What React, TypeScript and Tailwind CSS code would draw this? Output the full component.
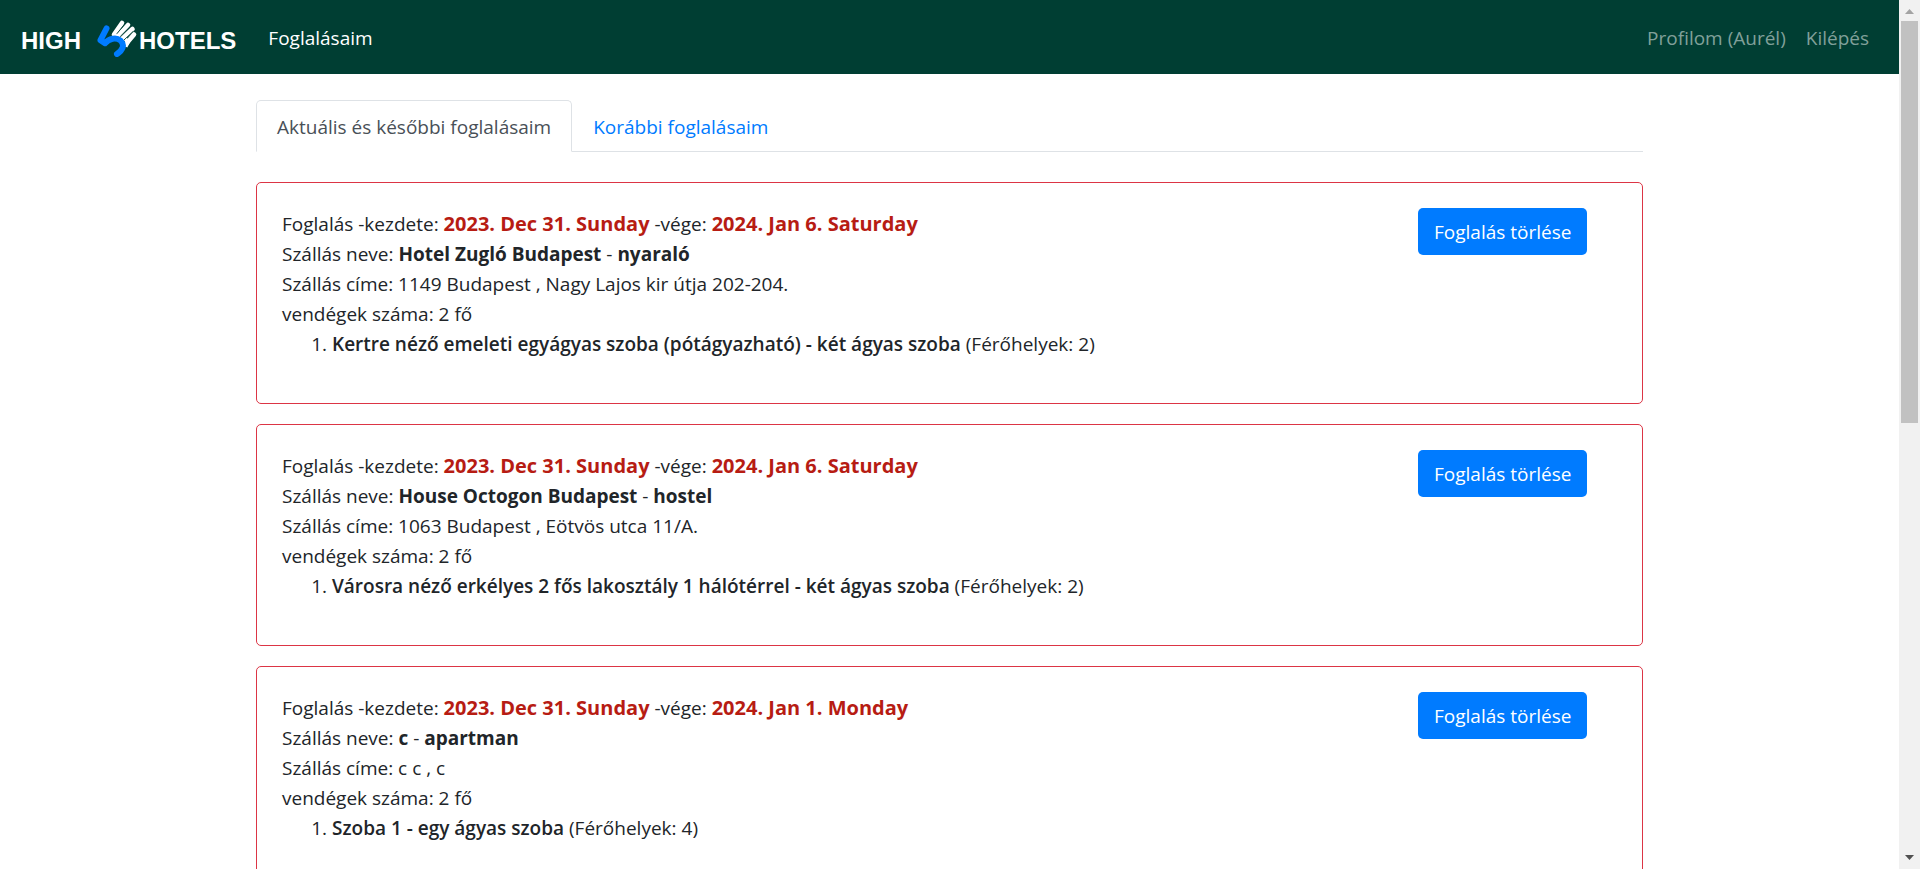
import React from "react";

type Booking = {
  id: number;
  from: string;
  to: string;
  name: string;
  kind: string;
  address: string;
  guests: number;
  room: string;
  capacity: number;
};

const bookings: Booking[] = [
  {
    id: 1,
    from: "2023. Dec 31. Sunday",
    to: "2024. Jan 6. Saturday",
    name: "Hotel Zugló Budapest",
    kind: "nyaraló",
    address: "1149 Budapest , Nagy Lajos kir útja 202-204.",
    guests: 2,
    room: "Kertre néző emeleti egyágyas szoba (pótágyazható) - két ágyas szoba",
    capacity: 2,
  },
  {
    id: 2,
    from: "2023. Dec 31. Sunday",
    to: "2024. Jan 6. Saturday",
    name: "House Octogon Budapest",
    kind: "hostel",
    address: "1063 Budapest , Eötvös utca 11/A.",
    guests: 2,
    room: "Városra néző erkélyes 2 fős lakosztály 1 hálótérrel - két ágyas szoba",
    capacity: 2,
  },
  {
    id: 3,
    from: "2023. Dec 31. Sunday",
    to: "2024. Jan 1. Monday",
    name: "c",
    kind: "apartman",
    address: "c c , c",
    guests: 2,
    room: "Szoba 1 - egy ágyas szoba",
    capacity: 4,
  },
];

function Logo() {
  return (
    <a
      href="#"
      className="flex items-center font-['Liberation_Sans',sans-serif] text-2xl font-bold text-white"
    >
      <span className="w-[75px] pt-2">HIGH</span>
      <svg width="43" height="40" viewBox="95 17 43 40" fill="none" aria-hidden="true">
        <g stroke="#fff" strokeWidth="4.6" strokeLinecap="round">
          <path d="M113 34.5L121 23" />
          <path d="M116.5 36.5L127 25" />
          <path d="M120.5 39.5L131.5 29" />
          <path d="M124.5 44.5L133 34.5" />
        </g>
        <path d="M123 37.5L127 42L124.5 46.5" stroke="#fff" strokeWidth="4" />
        <g stroke="#003e33" strokeWidth="0.9" strokeLinecap="round">
          <path d="M116 33.5L123.8 24" />
          <path d="M119.5 36.2L129 26.8" />
          <path d="M123 40L132 31.5" />
        </g>
        <path
          d="M105.5 28.5L99.5 40.2L104 43.2C108 38.500 115 37 119.500 40.500C124 45 122 50 116 54"
          stroke="#007bff"
          strokeWidth="6"
          strokeLinecap="round"
          strokeLinejoin="round"
        />
      </svg>
      <span className="pt-2">HOTELS</span>
    </a>
  );
}

function BookingCard({ b }: { b: Booking }) {
  return (
    <article className="flex rounded-[5px] border border-[#dc3545] p-[25px]">
      <div className="min-w-0 flex-1 pt-px">
        <p>
          Foglalás -kezdete: <b className="text-xl leading-none font-bold text-[#b71c13]">{b.from}</b>{" "}
          -vége: <b className="text-xl leading-none font-bold text-[#b71c13]">{b.to}</b>
        </p>
        <p>
          Szállás neve: <b className="font-bold">{b.name}</b> - <b className="font-bold">{b.kind}</b>
        </p>
        <p>Szállás címe: {b.address}</p>
        <p>vendégek száma: {b.guests} fő</p>
        <ol className="mb-[19px] list-decimal pl-[50px]">
          <li>
            <span className="font-semibold">{b.room}</span> (Férőhelyek: {b.capacity})
          </li>
        </ol>
      </div>
      <div className="w-[199px] shrink-0">
        <button
          type="button"
          className="flex h-[47px] items-center rounded-[5px] bg-[#007bff] px-4 text-white"
        >
          Foglalás törlése
        </button>
      </div>
    </article>
  );
}

function Scrollbar() {
  return (
    <div className="flex w-[21px] shrink-0 flex-col items-center bg-[#f1f1f1]" aria-hidden="true">
      <svg width="17" height="21" viewBox="0 0 17 21">
        <path d="M4 14L8.5 9L13 14Z" fill="#a3a3a3" />
      </svg>
      <div className="flex w-[17px] flex-1 flex-col">
        <div className="h-[48.6%] bg-[#c1c1c1]" />
      </div>
      <svg width="17" height="21" viewBox="0 0 17 21">
        <path d="M4 7L8.5 12L13 7Z" fill="#505050" />
      </svg>
    </div>
  );
}

export default function App() {
  return (
    <div className="flex h-screen overflow-hidden bg-white font-['Open_Sans','Noto_Sans',sans-serif] text-[19px] leading-[30px] text-[#212529]">
      <div className="min-w-0 flex-1 overflow-hidden">
        <nav className="flex h-[74px] items-center bg-[#003e33] pr-[30px] pl-[21px]">
          <Logo />
          <a href="#" className="ml-8 pt-0.5 text-white">
            Foglalásaim
          </a>
          <div className="ml-auto flex gap-5 pt-0.5 text-[#80a09a]">
            <a href="#">Profilom (Aurél)</a>
            <a href="#">Kilépés</a>
          </div>
        </nav>
        <main className="mx-auto mt-[26px] max-w-[1387px]">
          <div role="tablist" className="flex border-b border-[#dee2e6]">
            <button
              type="button"
              role="tab"
              aria-selected="true"
              className="-mb-px rounded-t-[5px] border border-[#dee2e6] border-b-white bg-white px-5 pt-[11px] pb-[9px] text-[#495057]"
            >
              Aktuális és későbbi foglalásaim
            </button>
            <button
              type="button"
              role="tab"
              aria-selected="false"
              className="px-[21px] pt-[11px] pb-[9px] text-[#007bff]"
            >
              Korábbi foglalásaim
            </button>
          </div>
          <div className="mt-[30px] flex flex-col gap-5">
            {bookings.map((b) => (
              <BookingCard key={b.id} b={b} />
            ))}
          </div>
        </main>
      </div>
      <Scrollbar />
    </div>
  );
}
